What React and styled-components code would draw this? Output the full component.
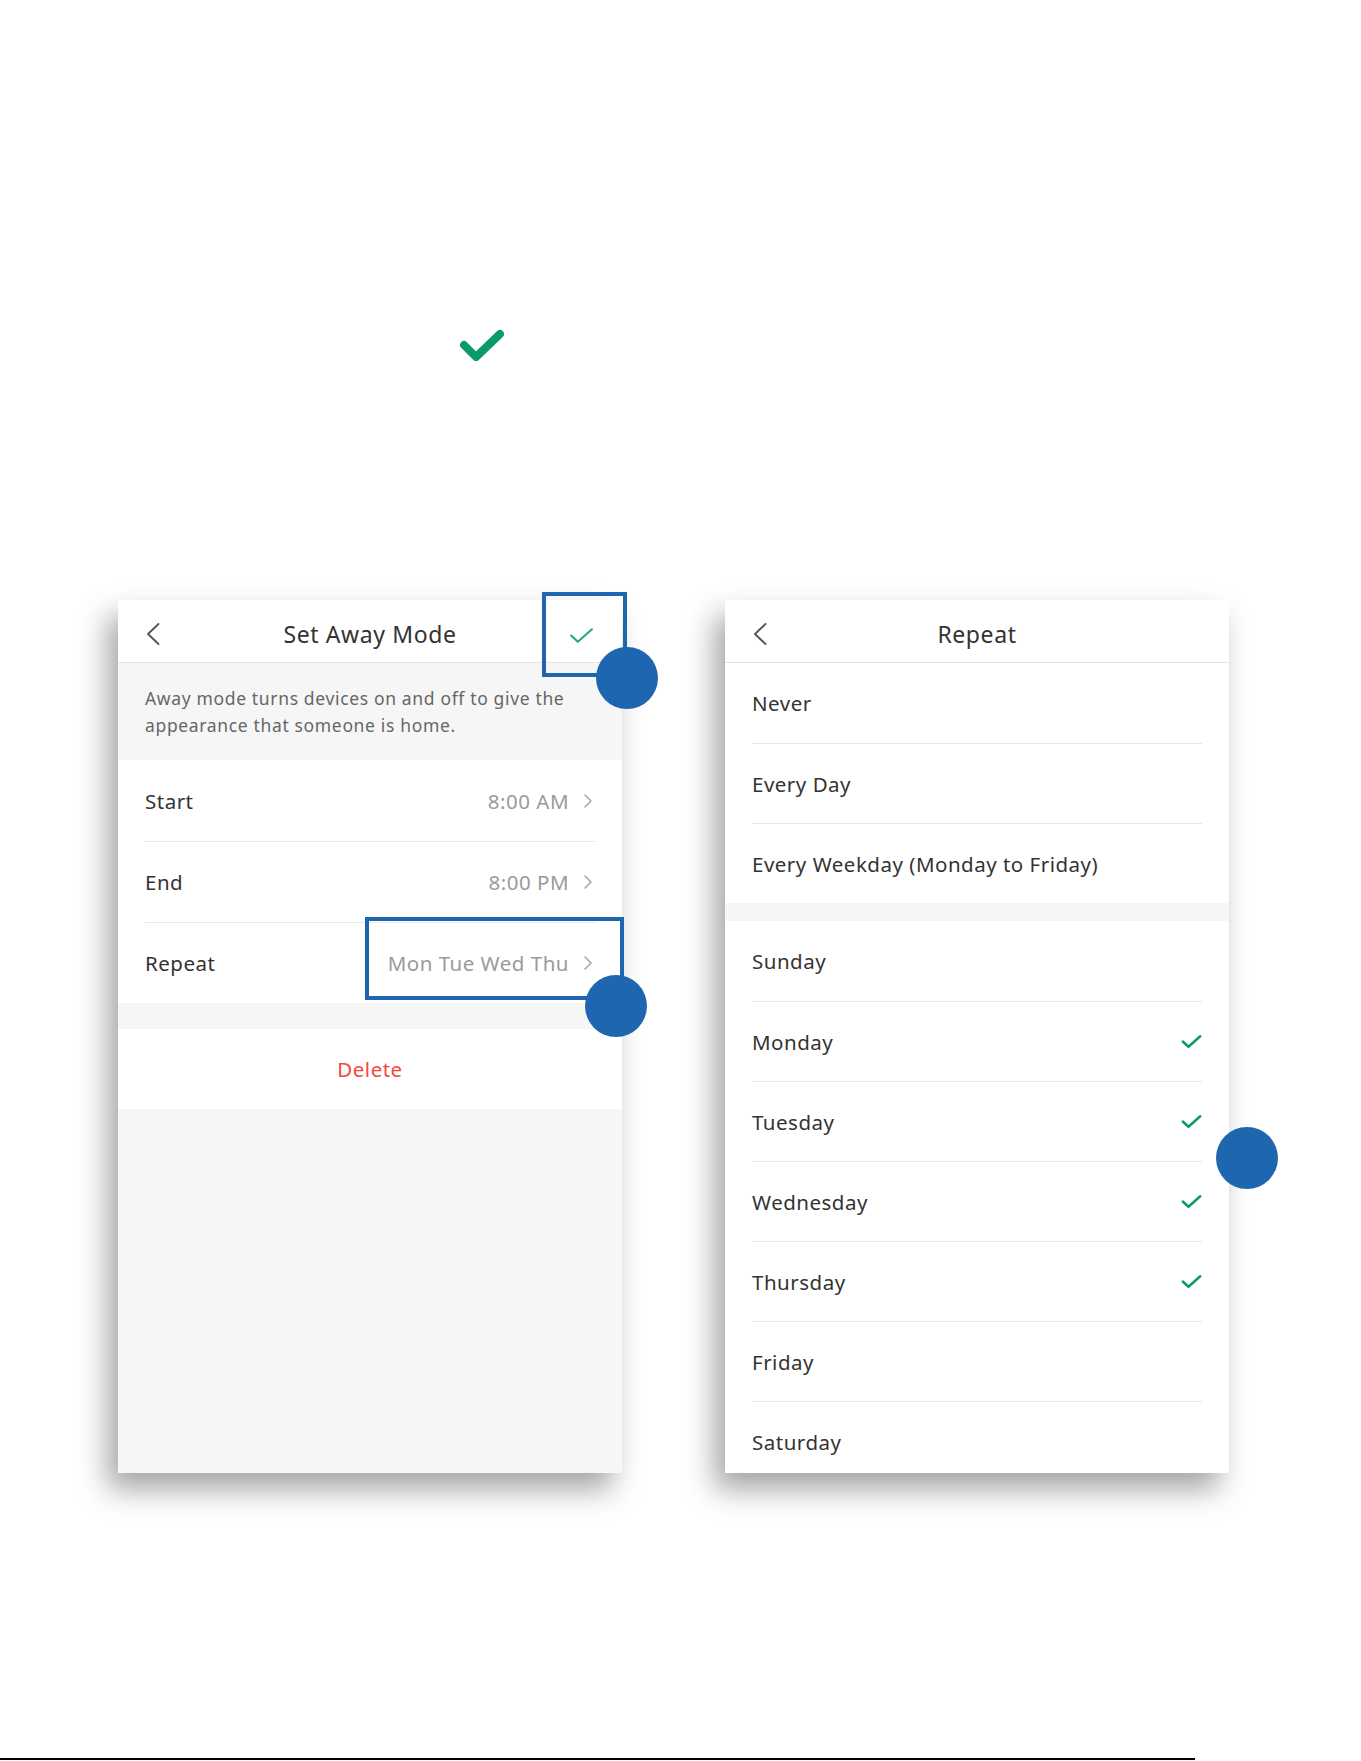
import React from "react";
import styled, { createGlobalStyle } from "styled-components";

const BLUE = "#1f66b1";
const GREEN = "#0f9a6b";
const FONT = `"Noto Sans", "Liberation Sans", sans-serif`;

const GlobalStyle = createGlobalStyle`
  html, body {
    margin: 0;
    padding: 0;
    background: #ffffff;
  }
  body {
    font-family: ${FONT};
    color: #333333;
  }
`;

const Page = styled.div`
  position: relative;
  height: 1761px;
  display: flex;
  flex-direction: column;
  overflow: hidden;
`;

const Hero = styled.div`
  padding: 329px 0 0 459px;
  height: 34px;
  svg {
    display: block;
  }
`;

const Screens = styled.div`
  display: flex;
  gap: 103px;
  margin-top: 237px;
  padding-left: 118px;
`;

const Screen = styled.div`
  position: relative;
  width: 504px;
  height: 873px;
  background: ${(p) => (p.$fill ? "#f6f6f6" : "#ffffff")};
  box-shadow: -10px 16px 28px rgba(0, 0, 0, 0.36);
  display: flex;
  flex-direction: column;
`;

const Clip = styled.div`
  height: 100%;
  overflow: hidden;
  display: flex;
  flex-direction: column;
`;

const Header = styled.div`
  position: relative;
  flex: none;
  height: 62px;
  background: #ffffff;
  border-bottom: 1px solid #e4e4e4;
  display: flex;
  align-items: center;
  justify-content: center;
`;

const Title = styled.div`
  font-size: 23px;
  color: #333333;
  letter-spacing: 0.6px;
  padding-top: 5px;
`;

const Back = styled.div`
  position: absolute;
  left: 27px;
  top: 22px;
  svg {
    display: block;
  }
`;

const HeaderAction = styled.div`
  position: absolute;
  right: 28px;
  top: 27px;
  svg {
    display: block;
  }
`;

const Note = styled.div`
  flex: none;
  background: #f6f6f6;
  padding: 22px 27px 21px;
  font-size: 17.5px;
  line-height: 27px;
  letter-spacing: 0.65px;
  color: #666666;
  height: 54px;
  white-space: nowrap;
`;

const Group = styled.div`
  flex: none;
  background: #ffffff;
  padding: 0 27px;
`;

const Row = styled.div`
  box-sizing: border-box;
  height: ${(p) => p.$h}px;
  display: flex;
  align-items: center;
  border-top: ${(p) => (p.$first ? "none" : "1px solid #e8e8e8")};
  font-size: 20.5px;
  letter-spacing: 0.5px;
  color: #333333;
`;

const Label = styled.span`
  flex: 1;
`;

const Value = styled.span`
  color: #9a9a9a;
  margin-right: 14px;
`;

const Arrow = styled.span`
  display: block;
  margin-right: 2px;
  svg {
    display: block;
  }
`;

const Gap = styled.div`
  flex: none;
  height: ${(p) => p.$h}px;
  background: #f6f6f6;
`;

const DeleteRow = styled.div`
  flex: none;
  height: 80px;
  background: #ffffff;
  display: flex;
  align-items: center;
  justify-content: center;
  font-size: 20.5px;
  letter-spacing: 0.5px;
  color: #f4473e;
`;

const Marker = styled.div`
  position: absolute;
  border: 4px solid ${BLUE};
  box-sizing: border-box;
  pointer-events: none;
`;

const Dot = styled.div`
  position: absolute;
  width: 62px;
  height: 62px;
  border-radius: 50%;
  background: ${BLUE};
`;

const BottomRule = styled.div`
  margin-top: auto;
  margin-bottom: 1px;
  width: 1195px;
  height: 2px;
  background: #000000;
`;

const RightChevron = () => (
  <svg width="10" height="16" viewBox="0 0 10 16">
    <path d="M2 2 L8 8 L2 14" fill="none" stroke="#a8a8a8" strokeWidth="1.6" strokeLinecap="round" strokeLinejoin="round" />
  </svg>
);

const BackChevron = () => (
  <svg width="16" height="24" viewBox="0 0 16 24">
    <path d="M13.5 2 L3 12 L13.5 22" fill="none" stroke="#555555" strokeWidth="1.9" strokeLinecap="round" strokeLinejoin="round" />
  </svg>
);

const Check = ({ width, height, stroke, color = GREEN }) => (
  <svg width={width} height={height} viewBox="0 0 24 16">
    <path d="M2 8 L8.5 14 L22 2" fill="none" stroke={color} strokeWidth={stroke} strokeLinecap="round" strokeLinejoin="round" />
  </svg>
);

const settingRows = [
  { label: "Start", value: "8:00 AM" },
  { label: "End", value: "8:00 PM" },
  { label: "Repeat", value: "Mon Tue Wed Thu" },
];

const presets = ["Never", "Every Day", "Every Weekday (Monday to Friday)"];

const days = [
  { name: "Sunday", on: false },
  { name: "Monday", on: true },
  { name: "Tuesday", on: true },
  { name: "Wednesday", on: true },
  { name: "Thursday", on: true },
  { name: "Friday", on: false },
  { name: "Saturday", on: false },
];

const AwayModeScreen = () => (
  <Screen $fill>
    <Clip>
      <Header>
        <Back>
          <BackChevron />
        </Back>
        <Title>Set Away Mode</Title>
        <HeaderAction>
          <Check width={25} height={17} stroke={2} color="#1faa76" />
        </HeaderAction>
      </Header>
      <Note>
        Away mode turns devices on and off to give the
        <br />
        appearance that someone is home.
      </Note>
      <Group>
        {settingRows.map((r, i) => (
          <Row key={r.label} $h={81} $first={i === 0}>
            <Label>{r.label}</Label>
            <Value>{r.value}</Value>
            <Arrow>
              <RightChevron />
            </Arrow>
          </Row>
        ))}
      </Group>
      <Gap $h={26} />
      <DeleteRow>Delete</DeleteRow>
    </Clip>
    <Marker style={{ left: 424, top: -8, width: 85, height: 85 }} />
    <Dot style={{ left: 478, top: 47 }} />
    <Marker style={{ left: 247, top: 317, width: 259, height: 83 }} />
    <Dot style={{ left: 467, top: 375 }} />
  </Screen>
);

const RepeatScreen = () => (
  <Screen>
    <Clip>
      <Header>
        <Back>
          <BackChevron />
        </Back>
        <Title>Repeat</Title>
      </Header>
      <Group>
        {presets.map((p, i) => (
          <Row key={p} $h={80} $first={i === 0}>
            <Label>{p}</Label>
          </Row>
        ))}
      </Group>
      <Gap $h={18} />
      <Group>
        {days.map((d, i) => (
          <Row key={d.name} $h={80} $first={i === 0}>
            <Label>{d.name}</Label>
            {d.on && <Check width={21} height={15} stroke={2.8} />}
          </Row>
        ))}
      </Group>
    </Clip>
    <Dot style={{ left: 491, top: 527 }} />
  </Screen>
);

export default function App() {
  return (
    <Page>
      <GlobalStyle />
      <Hero>
        <svg width="46" height="34" viewBox="0 0 46 34">
          <path d="M5 16 L17 28 L41 5" fill="none" stroke="#0a9a6c" strokeWidth="8" strokeLinecap="round" strokeLinejoin="round" />
        </svg>
      </Hero>
      <Screens>
        <AwayModeScreen />
        <RepeatScreen />
      </Screens>
      <BottomRule />
    </Page>
  );
}
